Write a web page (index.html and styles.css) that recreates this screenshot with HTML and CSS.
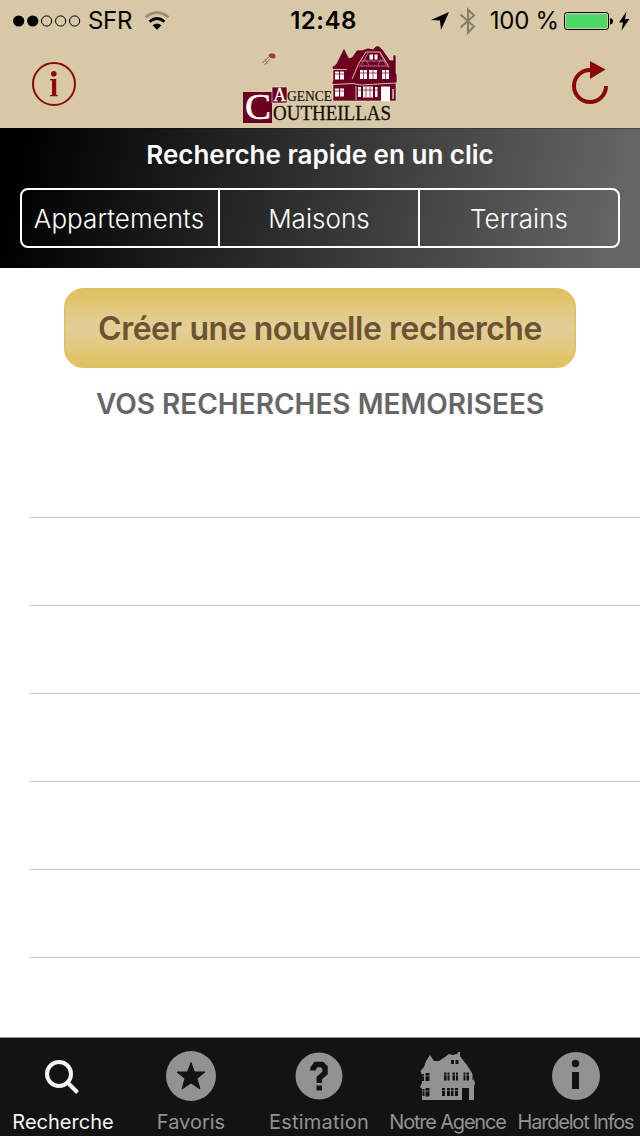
FILE: index.html
```html
<!DOCTYPE html>
<html lang="fr">
<head>
    <meta charset="UTF-8">
    <meta name="viewport" content="width=device-width, initial-scale=1.0">
    <title>Agence Coutheillas</title>
    <link rel="stylesheet" href="styles.css">
</head>
<body>

    <header class="header">
        <div class="status">
            <div class="status-left">
                <svg class="dots" width="68" height="12" viewBox="0 0 68 12">
                    <circle cx="5.7" cy="6" r="5.6"/>
                    <circle cx="19.7" cy="6" r="5.6"/>
                    <g fill="none" stroke="#000">
                        <circle cx="33.6" cy="6" r="5.1"/>
                        <circle cx="47.6" cy="6" r="5.1"/>
                        <circle cx="61.6" cy="6" r="5.1"/>
                    </g>
                </svg>
                <span class="carrier">SFR</span>
                <svg class="wifi" width="26" height="20" viewBox="0 0 26 20">
                    <path d="M1.5 6.3Q13 -3 24.5 6.3" fill="none" stroke="#968d77" stroke-width="2.7"/>
                    <path d="M5.5 10.7Q13 4.5 20.5 10.7" fill="none" stroke="#000" stroke-width="2.9"/>
                    <path d="M8.5 14.2Q13 10.7 17.5 14.2L13 18.7Z"/>
                </svg>
            </div>
            <span class="time">12:48</span>
            <div class="status-right">
                <svg class="location" width="20" height="20" viewBox="0 0 20 20">
                    <path d="M19 1L11 19L10 9.500L1 9Z"/>
                </svg>
                <svg class="bluetooth" width="17" height="28" viewBox="0 0 17 28">
                    <path d="M1.500 7.500L15 19.500L9 25.500V2.500L15 8.500L1.500 20.500" fill="none" stroke="#857c68" stroke-width="2"/>
                </svg>
                <span class="percent">100 %</span>
                <svg class="battery" width="50" height="20" viewBox="0 0 50 20">
                    <rect x="0.500" y="1.500" width="44" height="17" rx="2.500" fill="none" stroke="#000"/>
                    <rect x="2" y="3" width="41" height="14" rx="1" fill="#4cd964"/>
                    <path d="M46 7Q49 7.500 49 10.200Q49 13 46 13.500Z"/>
                </svg>
                <svg class="bolt" width="12" height="20" viewBox="0 0 12 20">
                    <path d="M8.500 0.500L1 11.500H5L3.500 19.500L11.500 8H7Z"/>
                </svg>
            </div>
        </div>

        <nav class="nav">
            <svg width="44" height="44" viewBox="0 0 44 44" fill="#8c0808">
                <circle cx="22" cy="22" r="21" fill="none" stroke="#8c0808" stroke-width="2"/>
                <circle cx="21.8" cy="11.8" r="2.8"/>
                <path d="M18 17H24.200V32.800L26 33.300V34.300H18V33.300L20 32.800V18.500L18 18Z"/>
            </svg>

            <svg class="logo" width="170" height="88" viewBox="0 0 170 88">
                <!-- clé -->
                <path d="M33 15L36 13L39.500 13.500L41 16L39.500 19L35 18Z" fill="#933a45" stroke="#e9dcc4" stroke-width="0.5"/>
                <path d="M34 17L27 23M35 19L29.500 25M30 19L32 24" stroke="#a8655f" fill="none"/>
                <!-- maison -->
                <path d="M97 27L101 24L109 8L114 18L117 17L122 10L127 10L133 8L138 9L141 6H144L148 10L155 20H158V15H161V33L162 35V42L161 43V61H98V45L97 43L98 40V30Z" fill="#6c0020" stroke="#efe5ce" stroke-width="0.6"/>
                <path d="M98 44.500L118 43.500L126 45L161 43M98 29.500H112M117 39L124 23L131 12H145L154 27M121 46V60" stroke="#e5d5c3" fill="none" stroke-width="0.9"/>
                <path d="M133 13L126 25M130 19L134 25M145 13L151 25M146 19L143 25M124 26H153M125 21H150" stroke="#c7939c" fill="none" stroke-width="0.8"/>
                <g fill="#fff">
                    <path d="M134.500 14.500h3.500v5h-3.500zM139.500 14.500h3v5h-3z"/>
                    <path d="M100 31.500h4v8h-4zM105 31.500h4v8h-4zM125 30h7v9h-7zM134 30h8v9h-8zM147 30h7v9h-7z"/>
                    <path d="M100 48.500h4v8h-4zM105 48.500h4v8h-4zM123 47h3v10h-3zM128 46.500h10v11h-10zM140 47h2.500v10h-2.500zM146 46.500h9v14.500h-9zM157.500 49h1.200v10h-1.200z"/>
                </g>
                <path d="M100 34H109M125 33H154M100 51H109M123 50H142.500M128.500 30V39M138 30V39M150.500 30V39M131 47V57M135 47V57" stroke="#6c0020" fill="none" stroke-width="0.7"/>
                <!-- texte -->
                <rect x="8" y="52" width="29" height="31" fill="#6c0020"/>
                <rect x="37" y="47" width="15" height="16" fill="#6c0020" stroke="#f3ece0" stroke-width="0.6"/>
                <text class="logo-text" x="10" y="79" font-size="36" textLength="26" lengthAdjust="spacingAndGlyphs" fill="#fff" stroke="#fff" stroke-width="0.6">C</text>
                <text class="logo-text" x="38.500" y="61" font-size="18" textLength="12.500" lengthAdjust="spacingAndGlyphs" fill="#fff" stroke="#fff" stroke-width="0.3">A</text>
                <text class="logo-text" x="52" y="61" font-size="15" textLength="45" lengthAdjust="spacingAndGlyphs" fill="#1c1014" stroke="#1c1014" stroke-width="0.2">GENCE</text>
                <text class="logo-text" x="38" y="80" font-size="21" textLength="118" lengthAdjust="spacingAndGlyphs" fill="#111" stroke="#111" stroke-width="0.3">OUTHEILLAS</text>
            </svg>

            <svg class="refresh" width="36" height="44" viewBox="0 0 36 44">
                <path d="M18 10A16 16 0 1 0 34 26" fill="none" stroke="#8c0808" stroke-width="4"/>
                <path d="M18 1L33.500 9.500L18 19Z" fill="#8c0808"/>
            </svg>
        </nav>
    </header>

    <section class="quick">
        <h2 class="quick-title">Recherche rapide en un clic</h2>
        <div class="segments">
            <a class="segment">Appartements</a>
            <a class="segment">Maisons</a>
            <a class="segment">Terrains</a>
        </div>
    </section>

    <main class="content">
        <button class="button">Créer une nouvelle recherche</button>
        <h3 class="saved-title">VOS RECHERCHES MEMORISEES</h3>
        <ul class="saved-list">
            <li></li>
            <li></li>
            <li></li>
            <li></li>
            <li></li>
            <li></li>
        </ul>
    </main>

    <footer class="tabs">
        <a class="tab active">
            <svg width="56" height="56" viewBox="0 0 56 56">
                <circle cx="24" cy="27" r="12" fill="none" stroke="#f4f4f4" stroke-width="4"/>
                <path d="M32.500 35.500L42.500 45.500" stroke="#f4f4f4" stroke-width="4"/>
            </svg>
            <span>Recherche</span>
        </a>
        <a class="tab">
            <svg width="56" height="56" viewBox="0 0 56 56">
                <circle cx="28" cy="29" r="25" fill="#929292"/>
                <path d="M28 15.500L31.500 25H42L34 31.500L37 42L28 36L19 42L22 31.500L14 25H24.500Z" fill="#131313" stroke="#131313" stroke-linejoin="round"/>
            </svg>
            <span>Favoris</span>
        </a>
        <a class="tab">
            <svg width="56" height="56" viewBox="0 0 56 56">
                <circle cx="28" cy="29" r="23.5" fill="#929292"/>
                <path d="M22 23.500V21.500L25 17.500H31L34 20.500V26L28.300 31V36" fill="none" stroke="#131313" stroke-width="5.5"/>
                <rect x="25.500" y="38.500" width="5.500" height="5" fill="#131313"/>
            </svg>
            <span class="wide">Estimation</span>
        </a>
        <a class="tab">
            <svg class="house" width="56" height="56" viewBox="0 0 56 56">
                <path d="M0.500 24L4 20L6 14L10 8L14 14L19 14L25 10L29 7L33 8L38 6.500V5H40V9L42 12L47 18L52 26L53 30L55 36L54 40V53H49V41H42V53H2V42L0 40L2 36V28Z" fill="#929292"/>
                <g fill="#131313">
                    <path d="M31 13h3v4h-3zM35.500 13h3v4h-3z"/>
                    <path d="M2 27h2v7h-2zM5.500 26h4v8h-4zM24 25.500h2.500v8h-2.500zM27.500 25.500h2v8h-2zM32.500 25.500h2.500v8h-2.500zM36 25.500h2v8h-2zM43.500 25.500h2v8h-2zM46.500 25.500h2.500v8h-2.500zM52.500 29h1v4h-1z"/>
                    <path d="M2.500 42h2v7h-2zM5.500 41h4v8.500h-4zM22 41h3v8h-3zM27 41h3v8h-3zM31 41h2.500v8h-2.500zM35 41h3v8h-3z"/>
                </g>
                <path d="M2 29H10M24 28H38M43 28H49M2 44H10M22 43.500H38" stroke="#929292" stroke-width="0.6"/>
            </svg>
            <span class="narrow">Notre Agence</span>
        </a>
        <a class="tab">
            <svg class="house" width="56" height="56" viewBox="0 0 56 56">
                <circle cx="28" cy="29" r="24" fill="#929292"/>
                <circle cx="27.5" cy="16.5" r="3.7" fill="#131313"/>
                <rect x="24" y="25" width="7" height="17" fill="#131313"/>
            </svg>
            <span class="narrow">Hardelot Infos</span>
        </a>
    </footer>

</body>
</html>
```
FILE: styles.css
```css
* {
    box-sizing: border-box;
}
body {
    margin: 0;
    height: 1136px;
    display: flex;
    flex-direction: column;
    overflow: hidden;
    background-color: #fff;
    font-family: Inter, 'Liberation Sans', sans-serif;
}
svg {
    display: block;
    flex-shrink: 0;
}

.header {
    height: 128px;
    background-color: #d7c9a5;
}
.status {
    height: 40px;
    display: grid;
    grid-template-columns: 1fr auto 1fr;
    align-items: center;
    padding: 1px 9px 0 13px;
    font-size: 24px;
    line-height: 40px;
    white-space: nowrap;
}
.status-left,
.status-right {
    display: flex;
    align-items: center;
}
.status-right {
    justify-content: flex-end;
}
.carrier {
    margin-left: 7px;
    letter-spacing: -0.3px;
}
.wifi {
    margin-left: 12px;
}
.time {
    margin-left: 3px;
    font-weight: 600;
    letter-spacing: 0.5px;
}
.bluetooth {
    margin-left: 9px;
}
.percent {
    margin-left: 14px;
    letter-spacing: -0.2px;
}
.battery {
    margin-left: 5px;
}
.bolt {
    margin-left: 4px;
    margin-right: 1px;
}

.nav {
    height: 88px;
    display: flex;
    justify-content: space-between;
    align-items: center;
    padding: 0 32px;
}
.logo {
    margin-left: -8px;
}
.refresh {
    margin-bottom: 4px;
}
.logo-text {
    font-family: 'Liberation Serif', serif;
}

.quick {
    height: 140px;
    padding: 10px 20px 0;
    color: #fff;
    border-top: 1px solid rgba(0, 0, 0, 0.3);
    background: linear-gradient(102deg, #000 4%, #333 50%, #666 96%);
}
.quick-title {
    margin: 0 0 17px;
    font-size: 26px;
    line-height: 32px;
    font-weight: 600;
    text-align: center;
}
.segments {
    height: 60px;
    display: grid;
    grid-template-columns: 196px 200px 1fr;
    border: 2px solid #fff;
    border-radius: 8px;
}
.segment {
    font-size: 26px;
    line-height: 57px;
    font-weight: 350;
    letter-spacing: 0.05px;
    text-align: center;
    border-left: 2px solid #fff;
}
.segment:first-child {
    border-left: none;
    padding-right: 2px;
}

.content {
    flex: 1;
    padding-top: 20px;
}
.button {
    display: block;
    width: 512px;
    height: 80px;
    margin: 0 auto;
    padding: 0;
    border: 2px solid #e2c160;
    border-radius: 20px;
    background: linear-gradient(#e2c160, #e2d09b 50%, #e2c160);
    color: #6c5331;
    font-family: inherit;
    font-size: 32px;
    font-weight: 600;
    letter-spacing: -0.47px;
    white-space: nowrap;
}
.saved-title {
    margin: 18px 0 0;
    height: 44px;
    font-size: 28px;
    line-height: 37px;
    font-weight: 600;
    color: #666;
    text-align: center;
}
.saved-list {
    margin: 0;
    padding: 0 0 0 30px;
    list-style: none;
}
.saved-list li {
    height: 88px;
    border-bottom: 1px solid #c8c7cc;
}

.tabs {
    height: 99px;
    display: grid;
    grid-template-columns: repeat(5, 128px);
    border-top: 1px solid #999;
    background-color: #131313;
}
.tab {
    display: flex;
    flex-direction: column;
    align-items: center;
    padding: 9px 2px 0 0;
    color: #929292;
    font-size: 20px;
    line-height: 24px;
    white-space: nowrap;
}
.tab span {
    margin-top: 7px;
}
.tab .wide {
    letter-spacing: 0.2px;
}
.tab .narrow {
    margin-left: 1px;
    letter-spacing: -1.2px;
}
.house {
    margin-left: 2px;
}
.active {
    color: #f4f4f4;
}
```
